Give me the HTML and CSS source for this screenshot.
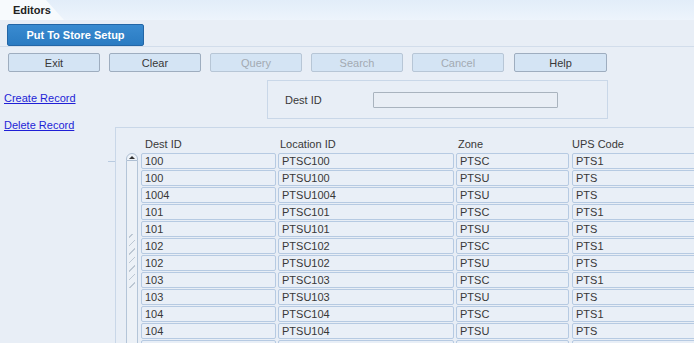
FILE: index.html
```html
<!DOCTYPE html>
<html>
    <head>
        <title>Editors</title>
        <meta name="viewport" content="width=device-width, initial-scale=1">
        <link rel="stylesheet" href="styles.css">
    </head>
    <body>
        <div id="tabbar">
            <span class="tab">Editors</span>
        </div>
        <div id="titlebar">
            <span class="titleButton">Put To Store Setup</span>
        </div>
        <div id="buttons">
            <span class="button">Exit</span>
            <span class="button">Clear</span>
            <span class="button disabled">Query</span>
            <span class="button disabled">Search</span>
            <span class="button disabled">Cancel</span>
            <span class="button">Help</span>
        </div>
        <div id="content">
            <div id="links">
                <a href="#">Create Record</a>
                <a href="#">Delete Record</a>
            </div>
            <div id="work">
                <div id="searchPanel">
                    <span class="fieldLabel">Dest ID</span>
                    <span class="field"></span>
                </div>
                <div id="tablePanel">
                    <div class="tableHead">
                        <span>Dest ID</span>
                        <span>Location ID</span>
                        <span>Zone</span>
                        <span>UPS Code</span>
                    </div>
                    <div class="tableBody">
                        <div class="scroll">
                            <div class="scrollUp"></div>
                            <div class="scrollTrack"><div class="grip"></div></div>
                        </div>
                        <div class="rows">
                            <span class="cell">100</span><span class="cell">PTSC100</span><span class="cell">PTSC</span><span class="cell">PTS1</span>
                            <span class="cell">100</span><span class="cell">PTSU100</span><span class="cell">PTSU</span><span class="cell">PTS</span>
                            <span class="cell">1004</span><span class="cell">PTSU1004</span><span class="cell">PTSU</span><span class="cell">PTS</span>
                            <span class="cell">101</span><span class="cell">PTSC101</span><span class="cell">PTSC</span><span class="cell">PTS1</span>
                            <span class="cell">101</span><span class="cell">PTSU101</span><span class="cell">PTSU</span><span class="cell">PTS</span>
                            <span class="cell">102</span><span class="cell">PTSC102</span><span class="cell">PTSC</span><span class="cell">PTS1</span>
                            <span class="cell">102</span><span class="cell">PTSU102</span><span class="cell">PTSU</span><span class="cell">PTS</span>
                            <span class="cell">103</span><span class="cell">PTSC103</span><span class="cell">PTSC</span><span class="cell">PTS1</span>
                            <span class="cell">103</span><span class="cell">PTSU103</span><span class="cell">PTSU</span><span class="cell">PTS</span>
                            <span class="cell">104</span><span class="cell">PTSC104</span><span class="cell">PTSC</span><span class="cell">PTS1</span>
                            <span class="cell">104</span><span class="cell">PTSU104</span><span class="cell">PTSU</span><span class="cell">PTS</span>
                            <span class="cell"></span><span class="cell"></span><span class="cell"></span><span class="cell"></span>
                        </div>
                    </div>
                </div>
            </div>
        </div>
    </body>
</html>
```

FILE: styles.css
```css
* {
    box-sizing: border-box;
    font-family: "Liberation Sans", Arial, sans-serif;
    font-size: 11px;
    color: #383838;
}

html, body {
    margin: 0;
    width: 694px;
    height: 343px;
    overflow: hidden;
    background: #e8eef6;
}

#tabbar {
    height: 20px;
    background: linear-gradient(#e2edf9, #edf4fc);
    display: flex;
    align-items: stretch;
}

.tab {
    display: flex;
    align-items: center;
    width: 64px;
    padding-left: 13px;
    font-weight: bold;
    color: #222;
    background: #f7fafd;
    clip-path: polygon(0 0, 46px 0, 64px 100%, 0 100%);
}

#titlebar {
    padding: 4px 0 0 7px;
    border-bottom: 1px solid #d2ddeb;
    height: 27px;
}

.titleButton {
    display: flex;
    align-items: center;
    justify-content: center;
    width: 137px;
    height: 22px;
    border: 1px solid #2366a6;
    border-radius: 2px;
    background: linear-gradient(#3a8bd0, #2a7bc2);
    color: #fff;
    font-weight: bold;
}

#buttons {
    display: flex;
    gap: 9px;
    padding: 6px 0 0 8px;
}

.button {
    display: flex;
    align-items: center;
    justify-content: center;
    width: 92px;
    height: 19px;
    border: 1px solid #9eadbf;
    border-radius: 2px;
    background: #d4e4f4;
}

.button.disabled {
    color: #a3aab2;
    border-color: #b7c6d6;
}

.button:last-child {
    width: 93px;
    margin-left: 1px;
}

#content {
    display: grid;
    grid-template-columns: 115px 1fr;
    margin-top: 8px;
}

#links {
    display: flex;
    flex-direction: column;
    gap: 13px;
    padding: 11px 0 0 4px;
}

#links a {
    color: #1f1fd6;
    line-height: 14px;
}

#searchPanel {
    display: flex;
    align-items: center;
    margin-left: 152px;
    width: 341px;
    height: 39px;
    padding-left: 17px;
    border: 1px solid #c9d7e8;
}

.fieldLabel {
    width: 88px;
}

.field {
    width: 185px;
    height: 16px;
    border: 1px solid #a9b3be;
    border-radius: 1px;
    background: #e9eef5;
}

#tablePanel {
    position: relative;
    margin-top: 8px;
    border-top: 1px solid #c9d7e8;
    border-left: 1px solid #c9d7e8;
    height: 230px;
}

#tablePanel::before {
    content: "";
    position: absolute;
    left: -8px;
    top: 33px;
    width: 7px;
    height: 1px;
    background: #b9cbe0;
}

.tableHead {
    display: grid;
    grid-template-columns: 135px 178px 114px 140px;
    padding: 9px 0 0 29px;
    height: 25px;
    line-height: 14px;
}

.tableBody {
    display: flex;
    gap: 3px;
    padding-left: 10px;
}

.scroll {
    width: 12px;
    height: 200px;
    display: flex;
    flex-direction: column;
}

.scrollUp {
    height: 8px;
    border: 1px solid #aebfd3;
    border-radius: 6px 6px 0 0;
    background: #eef3f9;
    display: flex;
    justify-content: center;
    align-items: center;
}

.scrollUp::before {
    content: "";
    border-left: 3px solid transparent;
    border-right: 3px solid transparent;
    border-bottom: 3px solid #333;
}

.scrollTrack {
    flex: 1;
    border-left: 1px solid #b4c5d8;
    border-right: 1px solid #b4c5d8;
    background: #ecf1f7;
    padding: 73px 0 0 2px;
}

.grip {
    width: 6px;
    height: 54px;
    background: repeating-linear-gradient(135deg, transparent 0 2px, #bcc7d3 2px 3px, transparent 3px 6px);
}

.rows {
    display: grid;
    grid-template-columns: 135px 176px 113px 140px;
    grid-auto-rows: 16px;
    column-gap: 2px;
    row-gap: 1px;
}

.rows .cell:nth-child(4n+4) {
    margin-left: 1px;
}

.cell {
    border: 1px solid #b6cae2;
    border-radius: 2px;
    background: #e9eff7;
    padding-left: 3px;
    line-height: 14px;
    white-space: nowrap;
    overflow: hidden;
}
```
